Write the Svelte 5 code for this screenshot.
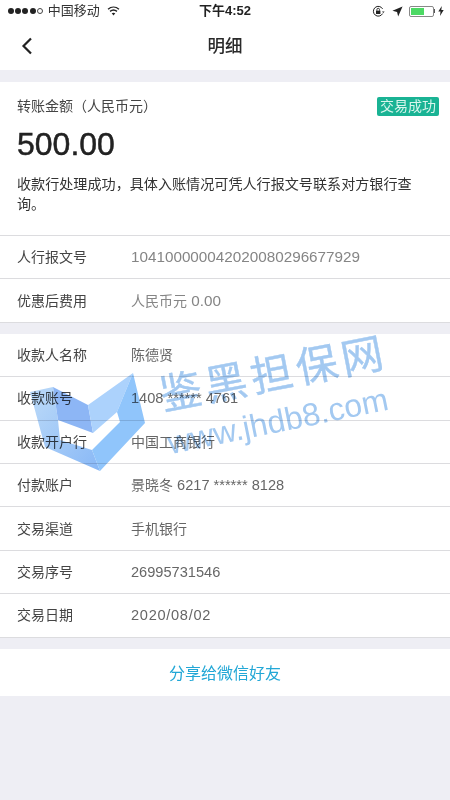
<script>
  const topRows = [
    { label: '人行报文号', value: '104100000042020080296677929' },
    { label: '优惠后费用', value: '人民币元 0.00' }
  ];
  const rows = [
    { label: '收款人名称', value: '陈德贤' },
    { label: '收款账号', value: '1408 ****** 4761' },
    { label: '收款开户行', value: '中国工商银行' },
    { label: '付款账户', value: '景晓冬 6217 ****** 8128' },
    { label: '交易渠道', value: '手机银行' },
    { label: '交易序号', value: '26995731546' },
    { label: '交易日期', value: '2020/08/02', date: true }
  ];

  // digits run a little larger than the Chinese text beside them
  const segments = (value) => value.split(/([\u4e00-\u9fff]+)/).filter(Boolean);
  const isCjk = (part) => /[\u4e00-\u9fff]/.test(part);
</script>

{#snippet valueText(value)}
  {#each segments(value) as part}
    <span class:latin={!isCjk(part)}>{part}</span>
  {/each}
{/snippet}

<div class="page">
  <div class="status">
    <div class="status-left">
      <span class="dots">
        <i></i><i></i><i></i><i></i><i class="empty"></i>
      </span>
      <span class="carrier">中国移动</span>
      <svg class="wifi" width="13" height="10" viewBox="0 0 14 11">
        <path d="M1 3.6C4.6.4 9.4.4 13 3.6" fill="none" stroke="#222" stroke-width="1.5"/>
        <path d="M3.2 5.9c2.4-2 5.2-2 7.6 0" fill="none" stroke="#222" stroke-width="1.5"/>
        <path d="M7 10.4 5 8.1c1.2-.9 2.8-.9 4 0z" fill="#222"/>
      </svg>
    </div>
    <span class="time">下午4:52</span>
    <div class="status-right">
      <svg class="lock" width="13" height="13" viewBox="0 0 13 13">
        <path d="M10.6 8.6A4.9 4.9 0 1 1 10.6 3.9" fill="none" stroke="#222" stroke-width="1"/>
        <path d="M10 6.5h2.6l-1.3 1.6z" fill="#222"/>
        <rect x="4" y="5.6" width="4.4" height="3.4" fill="#222"/>
        <path d="M4.9 5.6V4.6a1.3 1.3 0 0 1 2.6 0v1" fill="none" stroke="#222" stroke-width=".9"/>
      </svg>
      <svg class="arrow" width="11" height="11" viewBox="0 0 10 10">
        <path d="M9.6.4 5.6 9.6 4.6 5.4.4 4.4z" fill="#222"/>
      </svg>
      <span class="battery"><span class="charge"></span></span>
      <span class="nub"></span>
      <svg width="6" height="10" viewBox="0 0 6 10">
        <path d="M3.8 0 .3 5.6h2.2L2 10l3.7-6H3.3z" fill="#222"/>
      </svg>
    </div>
  </div>

  <header class="nav">
    <svg class="back" width="12" height="18" viewBox="0 0 12 18">
      <path d="M10 1.5 2.5 9l7.5 7.5" fill="none" stroke="#222" stroke-width="2.2"/>
    </svg>
    <h1>明细</h1>
  </header>

  <section class="summary">
    <div class="summary-head">
      <span class="caption">转账金额（人民币元）</span>
      <span class="badge">交易成功</span>
    </div>
    <div class="amount">500.00</div>
    <p>收款行处理成功，具体入账情况可凭人行报文号联系对方银行查询。</p>
  </section>

  <section class="list first">
    {#each topRows as row}
      <div class="row">
        <span class="label">{row.label}</span>
        <span class="value">{@render valueText(row.value)}</span>
      </div>
    {/each}
  </section>

  <section class="list">
    {#each rows as row}
      <div class="row">
        <span class="label">{row.label}</span>
        <span class="value" class:date={row.date}>{@render valueText(row.value)}</span>
      </div>
    {/each}
  </section>

  <button class="share">分享给微信好友</button>

  <!-- watermark stamped over the screenshot -->
  <div class="mark" aria-hidden="true">
    <svg class="mark-logo" width="450" height="800" viewBox="0 0 450 800">
      <defs>
        <linearGradient id="left-face" gradientUnits="userSpaceOnUse" x1="35" y1="410" x2="100" y2="465">
          <stop offset="0" stop-color="#b4d5f8"/>
          <stop offset="1" stop-color="#8ab9f6"/>
        </linearGradient>
      </defs>
      <polygon points="30,392 53,387 58,420 60,440 92,450 100,471 45,447" fill="url(#left-face)"/>
      <polygon points="53,387 88,405 93,433 58,420" fill="#8db6f5"/>
      <polygon points="88,405 133,373 117,412 93,433" fill="#acd2fc"/>
      <polygon points="133,373 145,423 100,471 92,450 120,422 117,412" fill="#90c5fb"/>
    </svg>
    <span class="mark-cn">鉴黑担保网</span>
    <span class="mark-en">www.jhdb8.com</span>
  </div>
</div>

<style>
  :global(body) {
    margin: 0;
    background: #eeeef4;
  }

  .page {
    position: relative;
    width: 450px;
    height: 800px;
    overflow: hidden;
    background: #eeeef4;
    font-family: 'Liberation Sans', 'Noto Sans CJK SC', sans-serif;
    color: #333;
  }

  .status {
    display: flex;
    align-items: center;
    justify-content: space-between;
    height: 22px;
    padding: 0 6px 0 8px;
    background: #fff;
    position: relative;
    line-height: 20px;
  }

  .status-left,
  .status-right {
    display: flex;
    align-items: center;
  }

  .dots {
    display: flex;
    gap: 1.2px;
    margin-right: 5px;
  }

  .dots i {
    width: 6px;
    height: 6px;
    border-radius: 50%;
    background: #222;
  }

  .dots i.empty {
    box-sizing: border-box;
    background: none;
    border: 0.8px solid #444;
  }

  .carrier {
    font-size: 13px;
    color: #333;
  }

  .wifi {
    margin-left: 7px;
  }

  .time {
    position: absolute;
    left: 199px;
    font-size: 13px;
    font-weight: 700;
    color: #222;
  }

  .lock {
    margin-right: 7px;
  }

  .arrow {
    margin-right: 6px;
  }

  .battery {
    display: block;
    box-sizing: border-box;
    width: 25px;
    height: 11px;
    padding: 1px;
    border: 0.8px solid #888;
    border-radius: 2px;
  }

  .charge {
    display: block;
    width: 13px;
    height: 100%;
    background: #4cd964;
  }

  .nub {
    width: 1.5px;
    height: 4px;
    margin-right: 3px;
    background: #555;
  }

  .nav {
    position: relative;
    display: flex;
    align-items: center;
    justify-content: center;
    height: 48px;
    background: #fff;
  }

  .back {
    position: absolute;
    left: 21px;
    top: 15px;
  }

  h1 {
    margin: 0;
    font-size: 17.5px;
    line-height: 24px;
    font-weight: 500;
    color: #2a2a2a;
  }

  .summary {
    box-sizing: border-box;
    height: 154px;
    margin-top: 12px;
    padding: 15px 11px 0 17px;
    background: #fff;
    border-bottom: 1px solid #dcdcdf;
  }

  .summary-head {
    display: flex;
    align-items: center;
    justify-content: space-between;
    height: 19px;
    line-height: 19px;
  }

  .caption {
    font-size: 14px;
    color: #444;
  }

  .badge {
    padding: 0 3px;
    height: 19px;
    font-size: 14px;
    color: #d8f5ec;
    background: #19b394;
    border-radius: 2px;
  }

  .amount {
    margin-top: 9px;
    font-size: 32px;
    line-height: 38px;
    color: #222;
    -webkit-text-stroke: 0.5px #222;
  }

  p {
    margin: 11px 0 0;
    width: 400px;
    font-size: 14.1px;
    line-height: 20px;
    color: #333;
  }

  .list {
    background: #fff;
    margin-top: 11px;
  }

  .list.first {
    margin-top: 0;
  }

  .row {
    box-sizing: border-box;
    display: flex;
    align-items: center;
    height: 43.4px;
    padding-left: 17px;
    border-bottom: 1px solid #dcdcdf;
    line-height: 20px;
  }

  .label {
    width: 114px;
    font-size: 14px;
    color: #444;
  }

  .value {
    font-size: 14px;
    color: #666;
  }

  .latin {
    font-size: 14.6px;
  }

  .list.first .value {
    color: #858585;
  }

  .list.first .latin {
    font-size: 15.25px;
  }

  .value.date {
    letter-spacing: 0.7px;
  }

  .share {
    display: block;
    width: 100%;
    height: 47px;
    margin-top: 11px;
    padding: 0;
    border: 0;
    background: #fff;
    font: inherit;
    font-size: 16px;
    color: #22a7d6;
  }

  .mark {
    position: absolute;
    inset: 0;
    pointer-events: none;
    mix-blend-mode: multiply;
  }

  .mark-logo {
    position: absolute;
    left: 0;
    top: 0;
  }

  .mark-cn,
  .mark-en {
    position: absolute;
    white-space: nowrap;
    transform-origin: 0 100%;
    color: #a3c9f1;
  }

  .mark-cn {
    left: 166px;
    top: 366px;
    font-size: 42px;
    line-height: 60px;
    letter-spacing: 4.2px;
    transform: rotate(-11deg);
    -webkit-text-stroke: 0.4px #a3c9f1;
  }

  .mark-en {
    left: 172px;
    top: 423px;
    font-size: 32px;
    line-height: 40px;
    transform: rotate(-11.5deg);
  }
</style>
